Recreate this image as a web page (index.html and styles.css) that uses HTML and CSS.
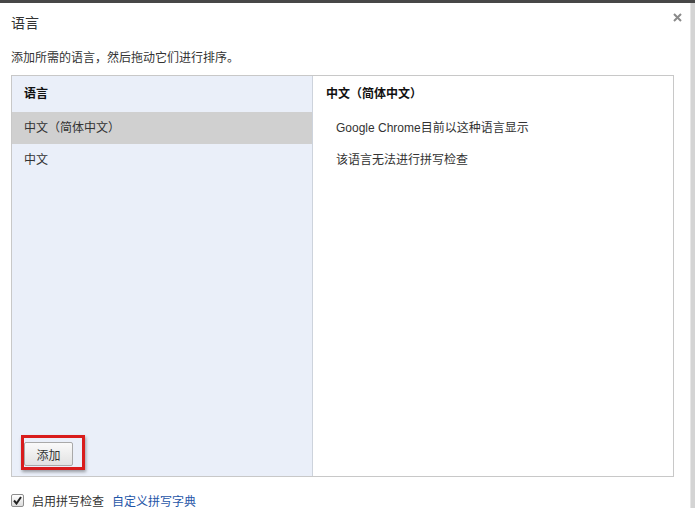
FILE: index.html
```html
<!DOCTYPE html>
<html lang="zh-CN">
<head>
<meta charset="utf-8">
<link rel="stylesheet" href="styles.css">
</head>
<body>
<div class="topbar"></div>
<div class="page">
  <div class="dialog">
    <div class="header">
      <div class="title">语言</div>
      <button class="close" aria-label="关闭">
        <svg width="9" height="9" viewBox="0 0 9 9"><path d="M1 1L8 8M8 1L1 8" stroke="#8a8a8a" stroke-width="2"/></svg>
      </button>
    </div>
    <div class="subtitle">添加所需的语言，然后拖动它们进行排序。</div>
    <div class="box">
      <div class="list">
        <div class="list-head">语言</div>
        <div class="row selected">中文（简体中文）</div>
        <div class="row">中文</div>
        <div class="list-foot">
          <span class="btn-wrap"><button class="btn">添加</button><span class="mark"></span></span>
        </div>
      </div>
      <div class="detail">
        <div class="detail-head">中文（简体中文）</div>
        <div class="detail-row">Google Chrome目前以这种语言显示</div>
        <div class="detail-row">该语言无法进行拼写检查</div>
      </div>
    </div>
    <div class="options">
      <span class="check">
        <svg width="9" height="9" viewBox="0 0 9 9"><path d="M1 4.5L3.5 7.5L8 1" fill="none" stroke="#222" stroke-width="2"/></svg>
      </span>
      <span class="opt-label">启用拼写检查</span>
      <a class="link" href="#">自定义拼写字典</a>
    </div>
  </div>
  <div class="edge"></div>
</div>
</body>
</html>
```
FILE: styles.css
```css
* { box-sizing: border-box; }
html, body { margin: 0; padding: 0; }
body {
  width: 695px;
  height: 508px;
  overflow: hidden;
  background: #fff;
  font-family: "Liberation Sans", "Noto Sans CJK SC", sans-serif;
  font-size: 12px;
  color: #333;
}
.topbar { height: 3px; background: #474747; }
.page { display: flex; height: 505px; }
.dialog {
  width: 690px;
  background: #fff;
  padding: 0 0 0 11px;
}
.edge {
  flex: 1;
  background: #d4d4d4;
  border-left: 1px solid #e6e6e6;
}
.header {
  display: flex;
  justify-content: space-between;
  align-items: flex-start;
  padding-top: 10px;
  padding-right: 8px;
}
.title {
  font-size: 14px;
  line-height: 20px;
  color: #333;
}
.close {
  margin: 0;
  padding: 0;
  border: 0;
  background: none;
  width: 9px;
  height: 9px;
  line-height: 0;
}
.subtitle {
  margin-top: 17px;
  line-height: 16px;
  color: #333;
}
.box {
  margin-top: 9px;
  width: 663px;
  height: 402px;
  border: 1px solid #c8c8c8;
  display: flex;
}
.list {
  width: 301px;
  background: #eaeff9;
  border-right: 1px solid #cdd3dc;
  display: flex;
  flex-direction: column;
}
.list-head {
  height: 36px;
  line-height: 36px;
  padding-left: 12px;
  font-weight: bold;
  color: #111;
}
.row {
  height: 32px;
  line-height: 32px;
  padding-left: 12px;
  color: #333;
}
.row.selected { background: #d0d0d0; }
.list-foot {
  margin-top: auto;
  padding: 0 0 10px 12px;
}
.btn-wrap { position: relative; display: inline-block; vertical-align: top; }
.btn {
  display: block;
  width: 49px;
  height: 24px;
  margin: 0;
  padding: 0;
  font-family: inherit;
  font-size: 12px;
  color: #333;
  background: linear-gradient(#fafafa, #e2e2e2);
  border: 1px solid #a9a9a9;
  border-radius: 2px;
}
.mark {
  position: absolute;
  left: -3px;
  top: -7px;
  width: 64px;
  height: 35px;
  border: 3px solid #d91c1c;
  box-shadow: 1px 2px 3px rgba(0,0,0,0.35);
  pointer-events: none;
}
.detail { flex: 1; background: #fff; }
.detail-head {
  height: 36px;
  line-height: 36px;
  padding-left: 13px;
  font-weight: bold;
  color: #111;
}
.detail-row {
  height: 32px;
  line-height: 32px;
  padding-left: 23px;
  color: #333;
}
.options {
  display: flex;
  align-items: center;
  height: 24px;
  margin-top: 11px;
}
.check {
  width: 13px;
  height: 13px;
  border: 1px solid #8e8e8e;
  border-radius: 2px;
  background: linear-gradient(#fff, #dcdcdc);
  display: flex;
  align-items: center;
  justify-content: center;
}
.opt-label { margin-left: 8px; color: #333; }
.link { margin-left: 8px; color: #1f56a8; text-decoration: none; }
```
